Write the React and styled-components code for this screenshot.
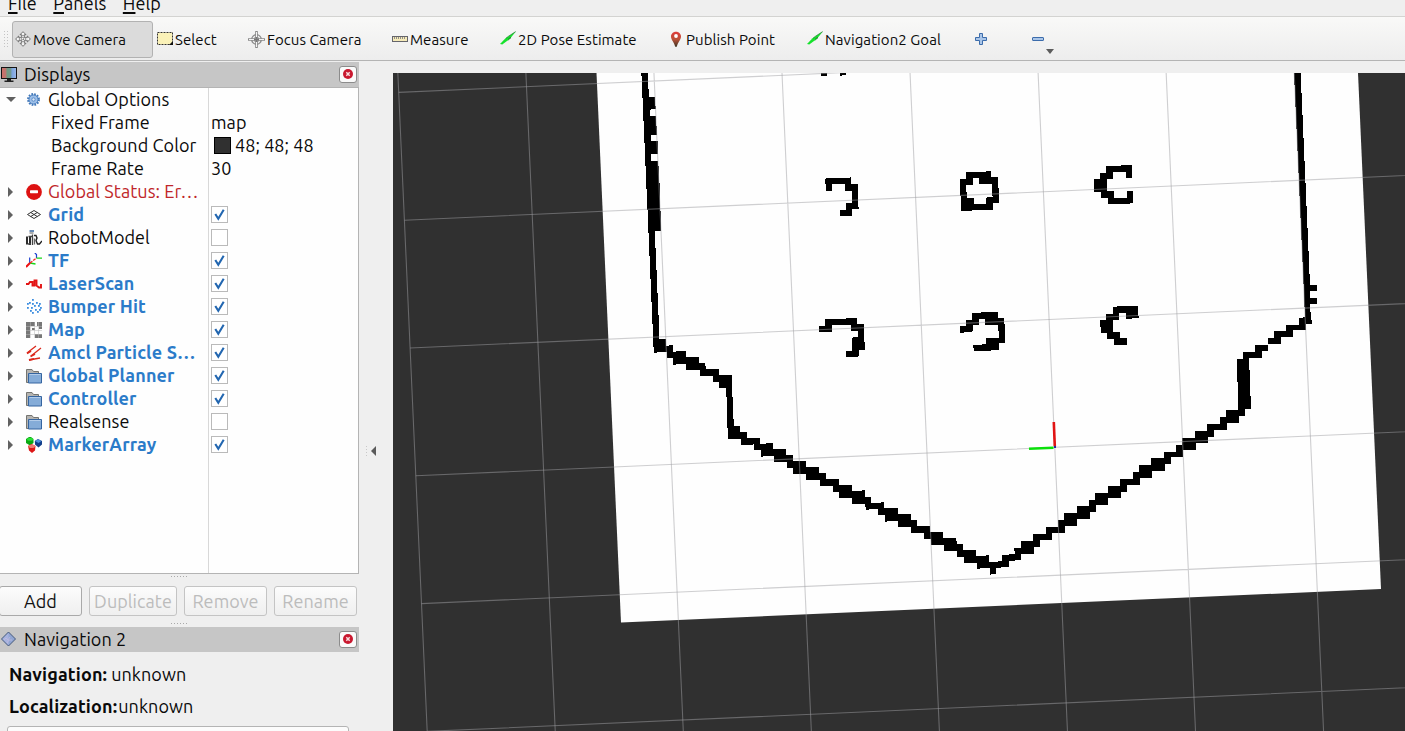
import React from 'react';
import styled, { createGlobalStyle, css } from 'styled-components';

const GlobalStyle = createGlobalStyle`
  * { box-sizing: border-box; }
  body {
    margin: 0;
    overflow: hidden;
    background: #efefef;
    color: #0a0a0a;
    font-family: Ubuntu, "Noto Sans", "Open Sans", sans-serif;
  }
  svg { display: block; }
`;

/* ---------- text ---------- */

const Label = styled.span`
  display: block;
  flex: none;
  justify-self: start;
  white-space: pre;
  font-size: ${(p) => (p.$small ? 15 : 18)}px;
  font-weight: ${(p) => (p.$bold ? 700 : 400)};
  letter-spacing: ${(p) => (p.$bold ? 0.14 : 0.07)}px;
  line-height: 22px;
  color: ${(p) => p.$color || 'inherit'};
`;

/* ---------- icons ---------- */

const Svg = ({ w = 16, h = 16, children }) => (
  <svg width={w} height={h} viewBox={`0 0 ${w} ${h}`}>{children}</svg>
);

const MoveIcon = () => (
  <Svg>
    <path
      d="M8 .7 11 3.7H9.3V6.7H12.3V5L15.4 8 12.3 11V9.3H9.3V12.3H11L8 15.3 5 12.3H6.7V9.3H3.7V11L.6 8 3.7 5V6.7H6.7V3.7H5Z"
      fill="#f6f6f6" stroke="#666" strokeWidth=".9"
    />
    <path d="M8 4v8M4 8h8" stroke="#444" strokeWidth=".8" strokeDasharray="1 1" />
  </Svg>
);
const SelectIcon = () => (
  <Svg>
    <rect x=".5" y="1.5" width="15" height="12" fill="#fbf2b8" stroke="#333" strokeDasharray="2 1" />
    <path d="M12 14h4v-4Z" fill="#111" />
  </Svg>
);
const FocusIcon = () => (
  <Svg w={17} h={17}>
    <g fill="none" stroke="#8a8a8a">
      <circle cx="8.5" cy="8.5" r="4.8" strokeWidth="1.3" />
      <circle cx="8.5" cy="8.5" r="2.4" />
      <path d="M8.5 0v17M0 8.5h17" strokeWidth="2.6" />
      <path d="M8.5 1v15M1 8.5h15" stroke="#f4f4f4" strokeWidth="1" />
      <path d="M8.5 6v5M6 8.5h5" stroke="#777" />
    </g>
  </Svg>
);
const RulerIcon = () => (
  <Svg>
    <rect x=".5" y="5.5" width="15" height="5" fill="#f5eab9" stroke="#65656b" />
    <path d="M2.5 6v2M4.5 6v2M6.5 6v2M8.5 6v2M10.5 6v2M12.5 6v2" stroke="#77777a" strokeWidth=".8" />
  </Svg>
);
const GreenArrowIcon = () => (
  <Svg>
    <path d="M0 13 5.5 7.2 8.3 5.4 15.8.6 11 6.6 8 9.2 2.3 13.4Z" fill="#16e22c" />
    <path d="M6 7.3 8.3 5.4 15.7.6M8 9.2 11 6.6 8.4 7.5" fill="none" stroke="#187a28" strokeWidth=".7" />
  </Svg>
);
const PinIcon = () => (
  <Svg w={12} h={17}>
    <defs>
      <linearGradient id="pin" x1="0" y1="0" x2="0" y2="1">
        <stop offset="0" stopColor="#e03a3a" />
        <stop offset=".5" stopColor="#bb5138" />
        <stop offset="1" stopColor="#3c3524" />
      </linearGradient>
    </defs>
    <path d="M6 .8C3 .8 1 3 1 5.6 1 9 4 11 5.2 15.8h1.6C8 11 11 9 11 5.6 11 3 9 .8 6 .8Z" fill="url(#pin)" />
    <circle cx="6" cy="5" r="1.9" fill="#fff" />
  </Svg>
);
const PlusIcon = () => (
  <Svg w={12} h={12}>
    <path d="M4.5.5h3v4h4v3h-4v4h-3v-4h-4v-3h4Z" fill="#a9c5e8" stroke="#3c6cab" />
  </Svg>
);
const MinusIcon = () => (
  <Svg w={12} h={12}>
    <rect x=".5" y="4.5" width="11" height="3" rx=".5" fill="#a9c5e8" stroke="#3c6cab" />
  </Svg>
);
const MonitorIcon = () => (
  <Svg w={17} h={17}>
    <defs>
      <linearGradient id="screen">
        <stop offset="0" stopColor="#cf6e68" />
        <stop offset=".3" stopColor="#bb7771" />
        <stop offset=".36" stopColor="#719b80" />
        <stop offset=".62" stopColor="#729993" />
        <stop offset=".7" stopColor="#7ca4dd" />
        <stop offset="1" stopColor="#9bb9ea" />
      </linearGradient>
    </defs>
    <rect x="1.5" y="1.5" width="15" height="11" fill="url(#screen)" stroke="#141414" />
    <path d="M7 13h4v1.5h2.5V16h-9v-1.5H7Z" fill="#222" />
  </Svg>
);
const DiamondIcon = () => (
  <Svg w={17}>
    <path d="M8.5 1 15.5 8 8.5 15 1.5 8Z" fill="#91a6d3" stroke="#45597b" />
    <path d="M8.5 2v12L2.5 8Z" fill="#a9b4df" />
    <path d="M4 9l2-2 2 2 2-3M7 12l2-3 3 0" stroke="#c3bbe0" fill="none" strokeWidth=".8" />
  </Svg>
);
const GearIcon = () => (
  <Svg w={14} h={14}>
    <circle cx="7.5" cy="6.5" r="5.4" fill="none" stroke="#3f76b8" strokeWidth="2" strokeDasharray="1.7 1.128" />
    <circle cx="7.5" cy="6.5" r="4.5" fill="#9dbfe8" stroke="#4b80c0" />
    <circle cx="7.5" cy="6.5" r="1.7" fill="#dbe7f6" stroke="#5b8dc9" />
  </Svg>
);
const ErrorIcon = () => (
  <Svg>
    <circle cx="8" cy="8" r="7.9" fill="#dd1212" />
    <rect x="4" y="6.2" width="8" height="3" rx=".6" fill="#fff" />
  </Svg>
);
const GridIcon = () => (
  <Svg>
    <path d="M1.5 7.5 8 3.5l6.5 4L8 11.5ZM4.75 5.5l6.5 4M11.25 5.5l-6.5 4" fill="none" stroke="#333" strokeWidth="1" />
  </Svg>
);
const RobotIcon = () => (
  <Svg>
    <path d="M3.5 1h4.5" stroke="#3f6fa5" strokeWidth="1.6" />
    <path d="M3.5 3h4" stroke="#333" strokeWidth=".8" />
    <path d="M1 6.500v8M4 6v9" stroke="#222" strokeWidth="1.9" />
    <path d="M6.5 4.500v10.500M2.500 6.500h3.500M2 14h3" stroke="#444" strokeWidth="1.300" />
    <path d="M8 5.500h2L11 8l-1 2.500 1.500 3.500h2l2.500-3" fill="none" stroke="#222" strokeWidth="1.400" />
    <path d="M8.500 8.500v6" stroke="#666" strokeWidth="1.300" />
  </Svg>
);
const TfIcon = () => (
  <Svg>
    <path d="M3.7 10V4.5M10.5 5V1.5L8.8 0" stroke="#1c3ed0" strokeWidth="1.2" fill="none" />
    <path d="M4 10l5.5 1M10.5 5.2H16" stroke="#18d518" strokeWidth="1.3" />
    <path d="M0 14 4 10" stroke="#e11" strokeWidth="2" />
    <path d="M4 10l6.5-5" stroke="#f22" strokeWidth="1.3" strokeDasharray="3 1" />
  </Svg>
);
const LaserIcon = () => (
  <Svg>
    <path d="M0 8H2.5L4 6H6.500V9.500H8.500V4.500H10.500V9.500L13 11.500H15V8" fill="none" stroke="#e31414" strokeWidth="1.900" />
  </Svg>
);
const CLOUD = [[6, 0], [10, 3], [3, 3], [13, 4], [1, 4], [6, 4], [8, 6], [1, 8], [5, 8], [12, 6], [14, 8], [9, 10], [4, 11], [6, 13], [11, 12], [13, 10]];
const CloudIcon = () => (
  <Svg>
    {CLOUD.map(([x, y]) => (
      <rect key={`${x}-${y}`} x={x} y={y} width="1.8" height="1.8" fill="#3b8de0" />
    ))}
  </Svg>
);
const MapIcon = () => (
  <Svg>
    <path d="M0 0h9v4H4v12H0ZM11 0h5v7h-3V4h-2ZM9 12h7v4H9ZM6 6h3v2H6Z" fill="#777" />
    <path d="M4.5 0v16M8.5 0v16M12.5 0v16M0 4.5h16M0 8.5h16M0 12.5h16" stroke="#bbb" strokeWidth=".5" />
  </Svg>
);
const PoseIcon = () => (
  <Svg>
    <path d="M1 8 10 1M5 11l10-8M3 15l11-2" stroke="#db291c" strokeWidth="1.3" />
    <path d="M1 8.5 5 6M4.5 11.5 9 9M3 15l5-1.2" stroke="#db291c" strokeWidth="1.8" />
  </Svg>
);
const FolderIcon = () => (
  <Svg>
    <path d="M.5 14.5V1.5h5.5l1.5 2h5V14.5Z" fill="#b5b4b1" stroke="#747470" />
    <path d="M2.5 5.5h13v9.5H2.5Z" fill="#85acd8" stroke="#3565a0" />
    <path d="M3.5 6.5h11" stroke="#b3cce9" />
  </Svg>
);
const MarkerIcon = () => (
  <Svg>
    <path d="M0 2 3 0h2l2.5 2v4L4 8.5 0 6Z" fill="#0aa813" />
    <ellipse cx="4" cy="2.2" rx="3" ry="1.5" fill="#2be037" />
    <path d="M8.8 4 12 2 16 4v3.5l-3.5 3L9 7.5Z" fill="#123f8b" />
    <path d="M9 4l3-1.7 3.5 1.7L12.5 6Z" fill="#4e91dd" />
    <path d="M2 9l3.5-2L9.5 9 9 13.5 6 16 3 13.5Z" fill="#dd1616" />
    <ellipse cx="5.8" cy="9.3" rx="3.3" ry="1.8" fill="#ef7a72" />
  </Svg>
);
const CheckIcon = () => (
  <Svg w={15} h={15}>
    <path d="M3.3 7 6.3 11.8 11.7 2.8" fill="none" stroke="#2266b0" strokeWidth="2.1" />
  </Svg>
);
const CloseIcon = () => (
  <Svg w={12} h={12}>
    <circle cx="6" cy="6" r="5" fill="#c9182f" />
    <path d="M4.3 4.3l3.4 3.4M7.7 4.3l-3.4 3.4" stroke="#f8dcde" strokeWidth="1.5" />
  </Svg>
);

/* ---------- window chrome ---------- */

const Window = styled.div`
  width: 1405px;
  height: 731px;
  display: flex;
  flex-direction: column;
  overflow: hidden;
`;

const MenuBar = styled.nav`
  height: 17px;
  flex: none;
  display: flex;
  gap: 16.5px;
  align-items: flex-end;
  padding: 0 8px 2px;
  border-bottom: 1px solid #d3d3d1;
`;
const Mnemonic = styled.span`
  text-decoration: underline;
  text-decoration-thickness: 1.5px;
  text-underline-offset: 2px;
`;

const ToolBar = styled.div`
  height: 44px;
  flex: none;
  display: flex;
  align-items: center;
  padding-left: 3px;
  background: linear-gradient(#f9f9f8, #ededed);
  border-bottom: 1px solid #b4b4b4;
`;
const Grip = styled.div`
  width: 5px;
  height: 17px;
  margin-right: 4px;
  background: radial-gradient(circle, #c4c4c4 0.7px, transparent 0.9px) 0 0 / 3px 3px;
`;
const ToolButton = styled.button`
  display: flex;
  align-items: center;
  flex: none;
  gap: ${(p) => p.$gap ?? 2}px;
  width: ${(p) => p.$width}px;
  height: 37px;
  margin-top: 1px;
  padding: 0 0 0 ${(p) => p.$inset ?? 3}px;
  font: inherit;
  color: inherit;
  border: 1px solid transparent;
  border-radius: 3px;
  background: none;
  ${Label} { margin-top: 1px; }
  ${(p) => p.$active && css`
    background: #dbdbdb;
    border-color: #b2b2b2;
    padding-left: 2px;
  `}
`;
const DropArrow = styled.span`
  align-self: flex-end;
  margin: 0 0 3px 0;
  border: 4.5px solid transparent;
  border-top: 5px solid #5c5c5c;
  border-bottom: 0;
`;

const Workspace = styled.div`
  flex: 1;
  display: flex;
  min-height: 0;
  padding-top: 1px;
`;
const Sidebar = styled.aside`
  width: 359px;
  flex: none;
  display: flex;
  flex-direction: column;
`;
const PanelHeader = styled.header`
  height: 25px;
  flex: none;
  display: flex;
  align-items: center;
  gap: 7px;
  padding: 0 2px 1px 0;
  background: #c6c6c6;
`;
const CloseButton = styled.button`
  width: 18px;
  height: 17px;
  margin-left: auto;
  padding: 0;
  display: grid;
  place-items: center;
  background: #fafafa;
  border: 1px solid #8c8c8c;
  border-radius: 3px;
`;

const Tree = styled.div`
  height: 487px;
  flex: none;
  background: linear-gradient(#d8d8d8, #d8d8d8) 208px 0 / 1px 100% no-repeat #fefefe;
  border: solid #b4b4b4;
  border-width: 1px 1px 1px 0;
`;
const Row = styled.div`
  height: 23px;
  display: grid;
  grid-template-columns: ${(p) => (p.$child ? '51px 160px' : '26px 22px 163px')} 1fr;
  align-items: center;
  ${Label} { margin-top: -2px; }
`;
const Value = styled.div`
  display: flex;
  align-items: center;
  gap: 4px;
`;
const Swatch = styled.span`
  width: 17px;
  height: 17px;
  margin-left: 3px;
  background: #303030;
  border: 1px solid #000;
`;
const Expander = styled.span`
  width: 0;
  height: 0;
  margin-left: 8px;
  border: 5px solid transparent;
  border-left-color: #616161;
  border-right: 0;
  ${(p) => p.$open && css`
    margin-left: 6px;
    border: 5px solid transparent;
    border-top-color: #616161;
    border-bottom: 0;
  `}
`;
const CheckBox = styled.span`
  width: 17px;
  height: 17px;
  border: 1px solid #bababa;
  background: #fff;
`;

const Splitter = styled.div`
  width: 18px;
  height: 3px;
  margin: ${(p) => p.$margin};
  flex: none;
  background: radial-gradient(circle, #aaa 0.7px, transparent 0.9px) 0 0 / 3px 3px;
`;
const ButtonRow = styled.div`
  display: flex;
  gap: 7px;
  flex: none;
`;
const PushButton = styled.button`
  width: ${(p) => p.$width}px;
  height: 30px;
  padding: 0;
  display: grid;
  place-items: center;
  font: inherit;
  color: ${(p) => (p.disabled ? '#bcbcbc' : '#111')};
  background: linear-gradient(#fcfcfc, #efefef);
  border: 1px solid ${(p) => (p.disabled ? '#c4c4c4' : '#a9a9a9')};
  border-radius: 3px;
  margin-left: ${(p) => p.$shift || 0}px;
  ${Label} { justify-self: center; }
`;
const NavPanel = styled.div`
  display: flex;
  flex-direction: column;
  gap: 10px;
  padding: 11px 0 0 9px;
`;
const Status = styled.div`
  display: flex;
  gap: ${(p) => p.$gap}px;
`;
const WideButton = styled.button`
  width: 342px;
  height: 30px;
  flex: none;
  margin: -1px 0 0 -2px;
  border: 1px solid #b4b4b4;
  border-radius: 3px;
  background: #fcfcfc;
`;
const CollapseStrip = styled.div`
  width: 34px;
  flex: none;
  display: flex;
  align-items: center;
  padding: 109px 0 0 6px;
`;
const StripDots = styled.span`
  width: 3px;
  height: 12px;
  background: radial-gradient(circle, #c8c8c8 0.7px, transparent 0.9px) 0 0 / 3px 3px;
`;
const CollapseArrow = styled.span`
  margin-left: 3px;
  border: 5px solid transparent;
  border-right-color: #5a5a5a;
  border-left: 0;
`;
const Viewport = styled.main`
  width: 1012px;
  height: 658px;
  flex: none;
  margin-top: 11px;
  background: #303030;
`;

/* ---------- map view ---------- */

const LEFT_WALL = 'M153 9H174V57H177V81H195L197 117 180 119V137H198L201 195H183V213H203V253H184V272H204L207 300 211 400 213 483H195V535H198V600H201V670H204V735H207V807H228V828L249 825V845L288 843V862H327V880H345L348 897H387V915H426V980H429V1048H432V1068H450V1087H471V1105H490V1125H453V1106H414V1048H411V980H408V953H387V936H369V918H330V900H288V882L249 884V863H231V846L192 848V830H189V762H186V695H183V627H180V558H177V490H174V420H171V357H168V288H165V220H162V152H159V84H156V18H153Z';
const BOTTOM_WALL = 'M21 0H39V27H42V48H60V67H81V84H120V102L159 99V118H198V136H219V153H258V171H297V189H318V207H357V225H396V243L435 241V261H453V279L492 277V295H534V312H573V331H591V348H630V366H669V384H708L711 402H729V420H768V438L807 436V456H825L846 453V435H867V432H885L882 414H903V393H939V373H978V351H1014V331H1032V310H1071V291H1080V327H1071V347H1035V368H996V389H960V410H942V431H903V450L867 453V470L828 474V492L810 494V474L771 476V458H732V440H711V422H672V404H633V386H612V368H573V350H534V332L495 335V315H474V297L438 299 435 281H396V263H357V245H339V227H300V210H258V192H219V174H201V155H162V137L123 140V121H102V103H63V86H24V54H21Z';
const SLOPE_WALL = 'M198 381H234V361H252V340H291V319H327V300H345V279H384V258H420V237H459V216H477V196H513V175H552V156H588V135H606V114H645V94H681V73H720V51H738V30H774V0H813V26H795V47H777V68H741V89H702V109H684V129H648V150H609V170H573V191H555V212H516V233H480V254H441V275H423V295H384V316H348V335H330V356H291V377H255V398H198Z';
const RIGHT_WALL = 'M402 9H423V68H426V136H429V204H432V273H435V340H438V408H441V475H444V543H447V612H450V645H471V663H450V684H471V702H450L453 750H456V762H438V780H399V801H363V822H324V843H306V864H267L270 935 273 1017H255V1038H237V1058H201V1079H162V1100H144V1119H108V1140H69V1160H33V1182H12V1200H0V1164H12V1147H48V1126H66V1105H105V1084H141V1062H180V1041H198V1020H237V1005H234V935H231V868H249V846H285V825H324V804H342V783H378V764H417V744L435 742Z';
const OBSTACLES = [
  'M63 9H81V18H63ZM120 9H138V14H125V17H120Z',
  'M75 327 84 324H150L153 321V342H174V410L177 411V417H156V438H120V421H138V400H156V362H136V343H96V362H78V343H75Z',
  'M498 306H558V304H573V322H594V354L597 356V398H579V419H516V423H483V377H480V327H498ZM498 345H519V325H537V343H576V375L579 380 558 383V402H522V385H501V365H498Z',
  'M918 288H963V285H996V323H978V306H939V327H921V364H942V383H981V363H999V397L1002 399 981 402H924V384H903V366H882V327H900V309H918Z',
  'M57 768H75V748H138V744H171V763H192V815L195 817V839H177V859L165 861H138V842H156V804L153 803 174 801V783H153V765H96V785H57Z',
  'M480 768H498V749H516V730H543V726H594V744H612V762H615V820H597V839L570 842H522L519 826H546V822H558V804H597V782H594V764H555V747H537V766H519V784L490 788H480Z',
  'M939 711H952V708H1014V737H1017V744L978 747V729H957V749H939V786H960V804H981V824H942V806H921V788H903V770H900V750H918V732H939Z',
];

const GRID_LINES = [-5, -4, -3, -2, -1, 0, 1, 2, 3, 4, 5];
const place = (x, y) => `translate(${x} ${y}) scale(.33333)`;

function MapView() {
  return (
    <svg width="1012" height="658" viewBox="393 73 1012 658">
      <polygon points="596.5,73 1358,73 1381,589 621,622.5" fill="#fefefe" />
      <g fill="#000" fillRule="evenodd" shapeRendering="crispEdges">
        <path d={LEFT_WALL} transform={place(590, 70)} />
        <path d={BOTTOM_WALL} transform={place(720, 410)} />
        <path d={SLOPE_WALL} transform={place(980, 400)} />
        <path d={RIGHT_WALL} transform={place(1160, 70)} />
        {OBSTACLES.map((d) => <path key={d} d={d} transform={place(800, 70)} />)}
      </g>
      <g transform="matrix(127.8 -5.7 5.7 127.8 1054.8 447.3)" stroke="#a0a0a4" strokeOpacity=".5" strokeWidth=".0085">
        {GRID_LINES.map((n) => (
          <path key={n} d={`M${n} -5V5M-5 ${n}H5`} />
        ))}
      </g>
      <path d="M1053.8 422 1054.8 446.5" stroke="#e11414" strokeWidth="2.6" />
      <path d="M1029 448.7 1053.5 447.7" stroke="#0be00b" strokeWidth="2.6" />
      <rect x="1054" y="446" width="2" height="2" fill="#2030a0" />
    </svg>
  );
}

/* ---------- data ---------- */

const TOOLS = [
  { name: 'Move Camera', icon: <MoveIcon />, width: 141, active: true },
  { name: 'Select', icon: <SelectIcon />, width: 91 },
  { name: 'Focus Camera', icon: <FocusIcon />, width: 144 },
  { name: 'Measure', icon: <RulerIcon />, width: 108 },
  { name: '2D Pose Estimate', icon: <GreenArrowIcon />, width: 167 },
  { name: 'Publish Point', icon: <PinIcon />, width: 140, gap: 4, inset: 6 },
  { name: 'Navigation2 Goal', icon: <GreenArrowIcon />, width: 168 },
];

const DISPLAYS = [
  { name: 'Grid', icon: <GridIcon />, on: true },
  { name: 'RobotModel', icon: <RobotIcon />, on: false },
  { name: 'TF', icon: <TfIcon />, on: true },
  { name: 'LaserScan', icon: <LaserIcon />, on: true },
  { name: 'Bumper Hit', icon: <CloudIcon />, on: true },
  { name: 'Map', icon: <MapIcon />, on: true },
  { name: 'Amcl Particle S…', icon: <PoseIcon />, on: true },
  { name: 'Global Planner', icon: <FolderIcon />, on: true },
  { name: 'Controller', icon: <FolderIcon />, on: true },
  { name: 'Realsense', icon: <FolderIcon />, on: false },
  { name: 'MarkerArray', icon: <MarkerIcon />, on: true },
];

const MENUS = ['File', 'Panels', 'Help'];

function Header({ icon, title }) {
  return (
    <PanelHeader>
      {icon}
      <Label>{title}</Label>
      <CloseButton aria-label="Close"><CloseIcon /></CloseButton>
    </PanelHeader>
  );
}

export default function App() {
  return (
    <Window>
      <GlobalStyle />
      <MenuBar>
        {MENUS.map((name) => (
          <Label key={name}><Mnemonic>{name[0]}</Mnemonic>{name.slice(1)}</Label>
        ))}
      </MenuBar>
      <ToolBar>
        <Grip />
        {TOOLS.map((t) => (
          <ToolButton key={t.name} $width={t.width} $active={t.active} $gap={t.gap} $inset={t.inset}>
            {t.icon}
            <Label $small>{t.name}</Label>
          </ToolButton>
        ))}
        <ToolButton $width={57}><PlusIcon /></ToolButton>
        <ToolButton $width={40}><MinusIcon /><DropArrow /></ToolButton>
      </ToolBar>
      <Workspace>
        <Sidebar>
          <Header icon={<MonitorIcon />} title="Displays" />
          <Tree>
            <Row>
              <Expander $open />
              <GearIcon />
              <Label>Global Options</Label>
            </Row>
            <Row $child>
              <span />
              <Label>Fixed Frame</Label>
              <Label>map</Label>
            </Row>
            <Row $child>
              <span />
              <Label>Background Color</Label>
              <Value><Swatch /><Label>48; 48; 48</Label></Value>
            </Row>
            <Row $child>
              <span />
              <Label>Frame Rate</Label>
              <Label>30</Label>
            </Row>
            <Row>
              <Expander />
              <ErrorIcon />
              <Label $color="#c0262a">Global Status: Er…</Label>
            </Row>
            {DISPLAYS.map((d) => (
              <Row key={d.name}>
                <Expander />
                {d.icon}
                <Label $bold={d.on} $color={d.on ? '#2b7bc9' : undefined}>{d.name}</Label>
                <CheckBox>{d.on && <CheckIcon />}</CheckBox>
              </Row>
            ))}
          </Tree>
          <Splitter $margin="1px 0 8px 170px" />
          <ButtonRow>
            <PushButton $width={83} $shift={-1}><Label>Add</Label></PushButton>
            <PushButton $width={88} disabled><Label>Duplicate</Label></PushButton>
            <PushButton $width={83} disabled><Label>Remove</Label></PushButton>
            <PushButton $width={83} disabled><Label>Rename</Label></PushButton>
          </ButtonRow>
          <Splitter $margin="6px 0 2px 170px" />
          <Header icon={<DiamondIcon />} title="Navigation 2" />
          <NavPanel>
            <Status $gap={4}><Label $bold>Navigation:</Label><Label>unknown</Label></Status>
            <Status $gap={1}><Label $bold>Localization:</Label><Label>unknown</Label></Status>
            <WideButton />
          </NavPanel>
        </Sidebar>
        <CollapseStrip><StripDots /><CollapseArrow /></CollapseStrip>
        <Viewport><MapView /></Viewport>
      </Workspace>
    </Window>
  );
}
